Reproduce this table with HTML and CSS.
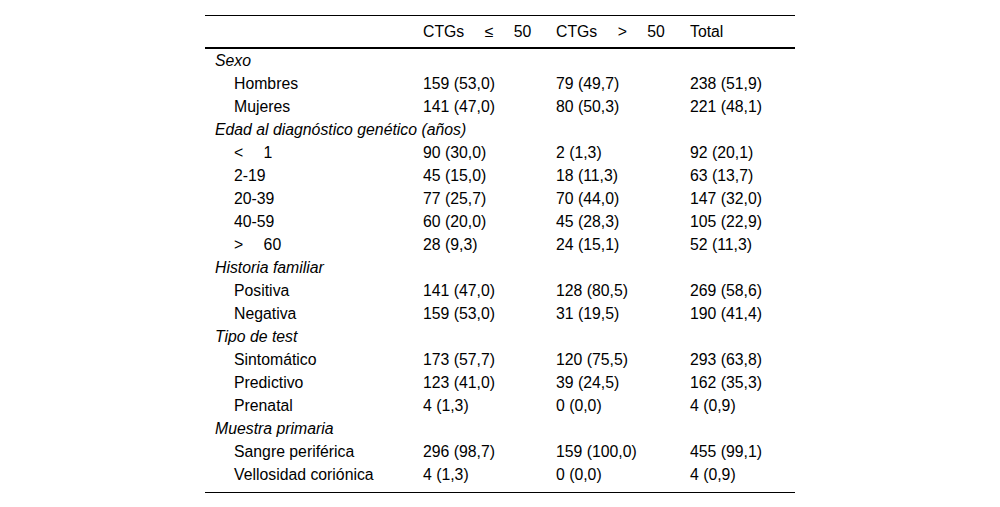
FILE: index.html
```html
<!DOCTYPE html>
<html lang="es">
<head>
<meta charset="utf-8">
<title>Tabla</title>
<link rel="stylesheet" href="styles.css">
</head>
<body>
<table class="tbl">
  <colgroup>
    <col class="c1"><col class="c2"><col class="c3"><col class="c4">
  </colgroup>
  <thead>
    <tr>
      <th></th>
      <th>CTGs <span class="op">≤</span> 50</th>
      <th>CTGs <span class="op">&gt;</span> 50</th>
      <th>Total</th>
    </tr>
  </thead>
  <tbody>
    <tr class="cat"><td colspan="4">Sexo</td></tr>
    <tr><td class="lbl">Hombres</td><td>159 (53,0)</td><td>79 (49,7)</td><td>238 (51,9)</td></tr>
    <tr><td class="lbl">Mujeres</td><td>141 (47,0)</td><td>80 (50,3)</td><td>221 (48,1)</td></tr>
    <tr class="cat"><td colspan="4">Edad al diagnóstico genético (años)</td></tr>
    <tr><td class="lbl"><span class="op2">&lt;</span> 1</td><td>90 (30,0)</td><td>2 (1,3)</td><td>92 (20,1)</td></tr>
    <tr><td class="lbl">2-19</td><td>45 (15,0)</td><td>18 (11,3)</td><td>63 (13,7)</td></tr>
    <tr><td class="lbl">20-39</td><td>77 (25,7)</td><td>70 (44,0)</td><td>147 (32,0)</td></tr>
    <tr><td class="lbl">40-59</td><td>60 (20,0)</td><td>45 (28,3)</td><td>105 (22,9)</td></tr>
    <tr><td class="lbl"><span class="op2">&gt;</span> 60</td><td>28 (9,3)</td><td>24 (15,1)</td><td>52 (11,3)</td></tr>
    <tr class="cat"><td colspan="4">Historia familiar</td></tr>
    <tr><td class="lbl">Positiva</td><td>141 (47,0)</td><td>128 (80,5)</td><td>269 (58,6)</td></tr>
    <tr><td class="lbl">Negativa</td><td>159 (53,0)</td><td>31 (19,5)</td><td>190 (41,4)</td></tr>
    <tr class="cat"><td colspan="4">Tipo de test</td></tr>
    <tr><td class="lbl">Sintomático</td><td>173 (57,7)</td><td>120 (75,5)</td><td>293 (63,8)</td></tr>
    <tr><td class="lbl">Predictivo</td><td>123 (41,0)</td><td>39 (24,5)</td><td>162 (35,3)</td></tr>
    <tr><td class="lbl">Prenatal</td><td>4 (1,3)</td><td>0 (0,0)</td><td>4 (0,9)</td></tr>
    <tr class="cat"><td colspan="4">Muestra primaria</td></tr>
    <tr><td class="lbl">Sangre periférica</td><td>296 (98,7)</td><td>159 (100,0)</td><td>455 (99,1)</td></tr>
    <tr class="last"><td class="lbl">Vellosidad coriónica</td><td>4 (1,3)</td><td>0 (0,0)</td><td>4 (0,9)</td></tr>
  </tbody>
</table>
</body>
</html>
```

FILE: styles.css
```css
html, body {
  margin: 0;
  padding: 0;
  background: #fff;
}

body {
  font-family: "Liberation Sans", Arial, sans-serif;
  font-size: 15.8px;
  color: #000;
}

.tbl {
  margin: 15px 0 0 205px;
  width: 590px;
  border-collapse: collapse;
  table-layout: fixed;
  border-top: 1px solid #000;
  border-bottom: 1px solid #000;
}

.c1 { width: 218px; }
.c2 { width: 133px; }
.c3 { width: 134px; }
.c4 { width: 105px; }

.tbl th {
  font-weight: normal;
  text-align: left;
  height: 30px;
  line-height: 31px;
  padding: 0;
  border-bottom: 2px solid #000;
  white-space: nowrap;
}

.tbl td {
  padding: 0;
  height: 23px;
  line-height: 23px;
  white-space: nowrap;
}

.cat td {
  font-style: italic;
  padding-left: 10px;
}

.tbl td.lbl {
  padding-left: 29px;
}

.last td {
  padding-bottom: 6px;
}

.op {
  margin: 0 16px;
}

.op2 {
  margin-right: 16px;
}
```
